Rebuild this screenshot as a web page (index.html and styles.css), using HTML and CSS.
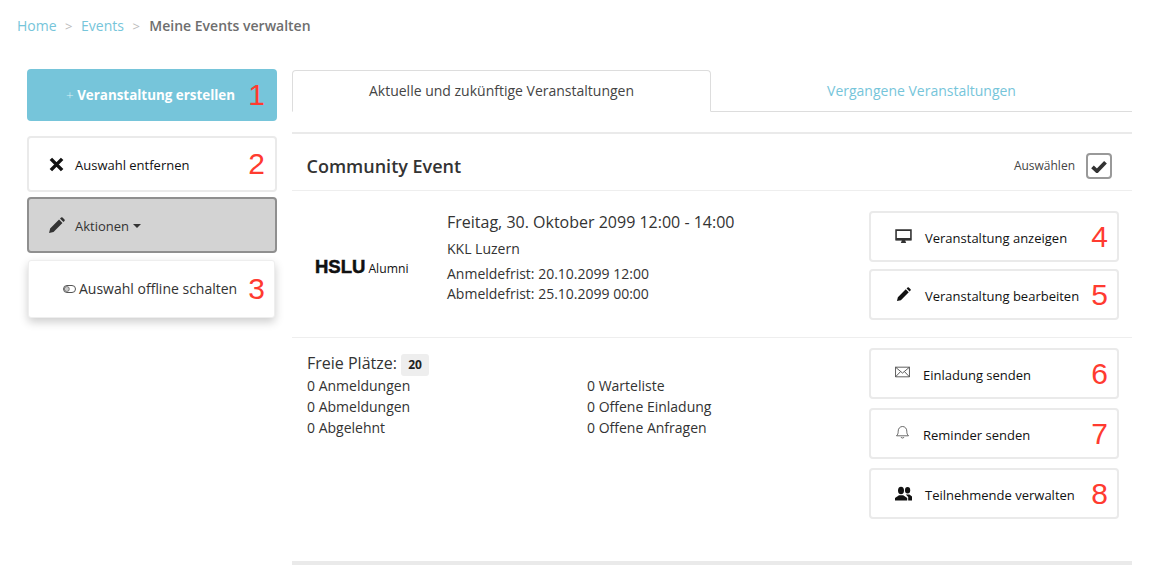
FILE: index.html
```html
<!DOCTYPE html>
<html lang="de">
<head>
<meta charset="utf-8">
<title>Meine Events verwalten</title>
<link rel="stylesheet" href="styles.css">
</head>
<body>
<nav class="crumbs"><a>Home</a><span class="sep">&gt;</span><a>Events</a><span class="sep">&gt;</span><b>Meine Events verwalten</b></nav>
<div class="layout">
  <aside class="side">
    <a class="btn-create"><span class="plus">+</span> Veranstaltung erstellen<span class="num">1</span></a>
    <a class="btn side-btn remove">
      <svg class="ico-x" viewBox="1 1 12 12"><path d="M2.500 2.500l9 9M11.500 2.500l-9 9" stroke="#111" stroke-width="2.800" fill="none"/></svg>
      <span>Auswahl entfernen</span><span class="num">2</span></a>
    <a class="btn side-btn actions">
      <svg class="ico-pen" viewBox="0 0 16 16"><path d="M1 15l1-4.200L10.400 2.400l3.200 3.200L5.200 14zM11.300 1.500l1-1a1 1 0 0 1 1.400 0l1.800 1.800a1 1 0 0 1 0 1.400l-1 1z" fill="#333"/></svg>
      <span>Aktionen</span><i class="caret"></i></a>
    <div class="menu">
      <svg class="ico-tag" viewBox="0 0 13 8"><rect x="0.500" y="0.500" width="12" height="7" rx="3.500" fill="none" stroke="#555"/><circle cx="3.800" cy="4" r="2.500" fill="#ccc" stroke="#555" stroke-width="0.700"/></svg>
      <span>Auswahl offline schalten</span><span class="num">3</span>
    </div>
  </aside>
  <main class="main">
    <div class="tabs">
      <div class="tab active">Aktuelle und zukünftige Veranstaltungen</div>
      <div class="tab">Vergangene Veranstaltungen</div>
    </div>
    <section class="event">
      <header class="event-head">
        <h2>Community Event</h2>
        <label class="pick">Auswählen<span class="check"><svg viewBox="0 0 16 13"><path d="M1.500 6.800l4.500 4.300L14.500 2.200" stroke="#333" stroke-width="3.800" fill="none"/></svg></span></label>
      </header>
      <div class="row info">
        <div class="logo"><span class="logo-main">HSLU</span><span class="logo-sub">Alumni</span></div>
        <div class="details">
          <div class="when">Freitag, 30. Oktober 2099 12:00 - 14:00</div>
          <div class="where">KKL Luzern</div>
          <div class="dl">Anmeldefrist: 20.10.2099 12:00</div>
          <div class="dl">Abmeldefrist: 25.10.2099 00:00</div>
        </div>
        <div class="actions-col first">
          <a class="btn act"><svg class="ico" viewBox="0 0 16 14"><path d="M1 1h14v9H1z" fill="none" stroke="#333" stroke-width="1.500"/><path d="M1 8.500h14v2H1zM6.500 10.500h3l1 2.500h-5z" fill="#333"/></svg><span>Veranstaltung anzeigen</span><span class="num">4</span></a>
          <a class="btn act"><svg class="ico" viewBox="0 0 16 16"><path d="M1 15l1-4.200L10.400 2.400l3.200 3.200L5.200 14zM11.300 1.500l1-1a1 1 0 0 1 1.400 0l1.800 1.800a1 1 0 0 1 0 1.400l-1 1z" fill="#111"/></svg><span>Veranstaltung bearbeiten</span><span class="num">5</span></a>
        </div>
      </div>
      <div class="row stats">
        <div class="stat-body">
          <div class="free">Freie Plätze: <span class="badge">20</span></div>
          <ul class="counts">
            <li>0 Anmeldungen</li><li>0 Warteliste</li>
            <li>0 Abmeldungen</li><li>0 Offene Einladung</li>
            <li>0 Abgelehnt</li><li>0 Offene Anfragen</li>
          </ul>
        </div>
        <div class="actions-col second">
          <a class="btn act tight"><svg class="ico thin raised" viewBox="0 0 14 10"><path d="M.500.500h13v9H.500zM.500.500L7 6l6.500-5.500M.500 9.500L5 4.800M13.500 9.500L9 4.800" fill="none" stroke="#444" stroke-width="0.800"/></svg><span>Einladung senden</span><span class="num">6</span></a>
          <a class="btn act tight"><svg class="ico thin raised" viewBox="0 0 14 14"><path d="M1 10.800c1.300-1.200 1.700-2.500 1.700-4.600C2.700 3.500 4.500 1.500 7 1.500s4.300 2 4.300 4.700c0 2.100.4 3.400 1.700 4.600zM5.500 12a1.600 1.600 0 0 0 3 0" fill="none" stroke="#444" stroke-width="0.800"/></svg><span>Reminder senden</span><span class="num">7</span></a>
          <a class="btn act"><svg class="ico" viewBox="0 0 17 14"><ellipse cx="6" cy="4" rx="3" ry="3.800" fill="#111"/><path d="M0 14v-2.500l4-2.700h4.200l4 2.700V14z" fill="#111"/><ellipse cx="12.600" cy="3.800" rx="2.600" ry="3.300" fill="#111"/><path d="M10.800 8h3.600L17 10v4h-3.800v-3.400z" fill="#111"/></svg><span>Teilnehmende verwalten</span><span class="num">8</span></a>
        </div>
      </div>
    </section>
    <div class="end-bar"></div>
  </main>
</div>
</body>
</html>
```
FILE: styles.css
```css
* { box-sizing: border-box; }
html, body { margin: 0; height: 100%; }
body { background: #fff; color: #333; font: 14px/20px "Open Sans", sans-serif; overflow: hidden; }
a { color: inherit; text-decoration: none; }

.crumbs { display: flex; align-items: center; height: 20px; margin: 16px 0 0 17px; color: #666; }
.crumbs a { color: #76c5da; }
.crumbs .sep { color: #bbb; margin: 0 8.500px; font-size: 13px; }
.crumbs b { margin-left: 1px; font-weight: 600; color: #6e6e6e; }

.layout { display: flex; align-items: flex-start; margin: 33px 0 0 27px; }
.side { width: 250px; flex: none; }
.main { width: 840px; margin: 1px 0 0 15px; }

.btn { display: flex; align-items: center; position: relative; background: #fff; border: 2px solid #eaeaea; border-radius: 4px; color: #111; font-size: 13px; }
.btn > span:not(.num) { position: relative; top: 1px; }
.num { position: absolute; top: 50%; transform: translateY(-50%); right: 12px; font: 30px/34px "Liberation Sans", sans-serif; color: #ff3b30; }

.btn-create { display: block; position: relative; height: 52px; background: #76c5da; border-radius: 4px; color: #fff; font-size: 13.400px; line-height: 52px; font-weight: 700; padding-left: 39px; }
.btn-create .plus { font-weight: 300; color: #d8eef4; }
.btn-create .num { right: 12px; }

.side-btn { width: 250px; padding-left: 20px; gap: 9px; }
.remove { height: 56px; margin-top: 15px; }
.remove .num { right: 10px; }
.actions { height: 56px; margin-top: 5px; padding-left: 19px; gap: 10px; background: #d3d3d3; border-color: #8f8f8f; color: #333; }
.ico-x { width: 15px; height: 15px; margin-right: 2px; }
.ico-pen { width: 17px; height: 17px; }
.caret { width: 0; height: 0; margin-left: -6px; border: 4px solid transparent; border-top-color: #333; border-bottom: 0; position: relative; top: 1px; }

.menu { display: flex; align-items: center; position: relative; width: 247px; height: 58px; margin: 7px 0 0 1px; padding-left: 34px; gap: 3px; background: #fff; border: 1px solid #eee; border-radius: 3px; box-shadow: 0 4px 10px rgba(0,0,0,.2); font-size: 14px; color: #333; }
.ico-tag { width: 13px; height: 8px; }
.menu .num { right: 9px; }

.tabs { display: flex; height: 42px; border-bottom: 1px solid #ddd; }
.tab { flex: 1; display: flex; align-items: center; justify-content: center; color: #76c5da; }
.tab.active { flex: none; width: 419px; height: 42px; color: #444; background: #fff; border: 1px solid #ddd; border-bottom: 1px solid #fff; border-radius: 4px 4px 0 0; font-size: 14px; }

.event { margin-top: 20px; border-top: 2px solid #eaeaea; }
.event-head { display: flex; align-items: center; justify-content: space-between; height: 57px; padding: 0 20px 0 14.500px; border-bottom: 1px solid #eee; }
h2 { margin: 8px 0 0; font-size: 18px; font-weight: 600; color: #333; }
.pick { display: flex; align-items: center; gap: 11px; font-size: 12px; color: #444; margin-top: 8px; height: 40px; }
.check { display: flex; align-items: center; justify-content: center; width: 26px; height: 26px; border: 2px solid #999; border-radius: 4px; }
.check svg { width: 16px; height: 13px; }

.row { display: flex; }
.info { height: 147px; border-bottom: 1px solid #eee; }
.logo { width: 155px; padding: 64px 0 0 23px; color: #111; white-space: nowrap; }
.logo-main { font: 700 18.500px/24px "Liberation Sans", sans-serif; -webkit-text-stroke: .5px #111; letter-spacing: 0; }
.logo-sub { font: 12.200px/24px "Open Sans", sans-serif; margin-left: 3px; }
.details { flex: 1; padding-top: 19px; color: #333; }
.when { font-size: 16px; line-height: 24px; }
.where { margin-top: 5px; }
.dl { line-height: 20px; }
.where + .dl { margin-top: 5px; }

.actions-col { width: 263px; flex: none; display: flex; flex-direction: column; padding-right: 13px; }
.act { width: 250px; height: 51px; padding-left: 24px; }
.first { padding-top: 20px; gap: 7px; }
.second { padding-top: 10px; gap: 9px; }
.act .ico { width: 17px; height: 15px; margin-right: 13px; flex: none; }
.act .thin { width: 15px; height: 14px; margin-right: 13px; }
.act .raised { margin-top: -3px; }
.act .num { right: 9px; }

.stats { height: 223px; }
.stat-body { flex: 1; padding: 14px 0 0 15px; }
.free { font-size: 16px; line-height: 22px; }
.badge { display: inline-block; min-width: 28px; padding: 0 6px; background: #eee; border-radius: 3px; font-size: 12px; font-weight: 700; text-align: center; line-height: 22px; color: #222; }
.counts { display: grid; grid-template-columns: 280px 1fr; margin: -1px 0 0; padding: 0; list-style: none; line-height: 21px; }
.end-bar { height: 4px; background: #eaeaea; }
```
